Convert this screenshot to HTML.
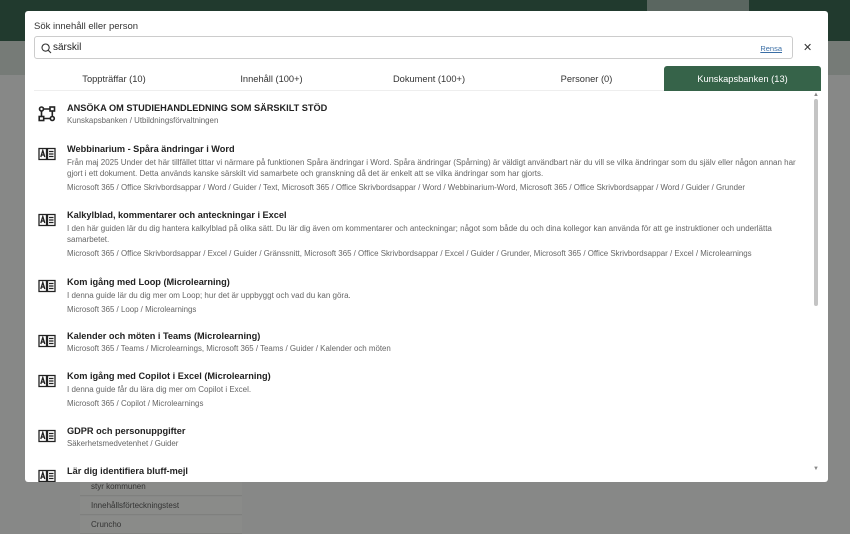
<!DOCTYPE html>
<html><head><meta charset="utf-8"><style>
*{box-sizing:border-box;margin:0;padding:0}
body{width:850px;height:532px;overflow:hidden;background:#878887;font-family:"Liberation Sans",sans-serif;position:relative}
.top{position:absolute;left:0;top:0;width:850px;height:41px;background:#213a2e}
.band{position:absolute;left:0;top:41px;width:850px;height:34px;background:#767b77}
.tb{position:absolute;left:647px;top:0;width:102px;height:41px;background:#5a6660}
.side{position:absolute;left:80px;width:162px;height:18px;background:#8a8b89;border-bottom:1px solid #7f807e;font-size:8px;color:#333;padding:4px 0 0 11px}
.modal{position:absolute;left:25px;top:11px;width:803px;height:471px;background:#fff;border-radius:3px;overflow:hidden}
.lbl{position:absolute;left:9px;top:10px;font-size:9.5px;color:#333}
.search{position:absolute;left:9px;top:25px;width:759px;height:23px;border:1px solid #ccc;border-radius:3px}
.search .q{position:absolute;left:9px;top:5px;font-size:10px;color:#222}
.search .r{position:absolute;right:10px;top:7px;font-size:7.5px;color:#3a6ea5;text-decoration:underline}
.x{position:absolute;left:778px;top:30px;font-size:11px;color:#333}
.tabs{position:absolute;left:9px;top:55px;width:787px;height:25px;border-bottom:1px solid #eee}
.tab{position:absolute;top:0;height:25px;font-size:9.3px;color:#333;text-align:center;line-height:26px}
.act{background:#366349;color:#fff;border-radius:3px 3px 0 0}
.sb{position:absolute;left:789px;top:88px;width:4px;height:207px;background:#c4c4c4;border-radius:2px}
.it{position:absolute;left:42px}
.t{font-size:9.2px;font-weight:bold;color:#222;height:15px;line-height:15px}
.d{font-size:8px;color:#666;line-height:11px;width:740px}
.p{font-size:7.9px;color:#666;margin-top:4px}
.ic{position:absolute;left:13px}
</style></head><body>
<div class="top"></div><div class="tb"></div><div class="band"></div>
<div class="side" style="top:478px">styr kommunen</div>
<div class="side" style="top:497px">Innehållsförteckningstest</div>
<div class="side" style="top:516px">Cruncho</div>
<div class="modal">
<div class="lbl">Sök innehåll eller person</div>
<div class="search"><svg style="position:absolute;left:6px;top:6px" width="11" height="11" viewBox="0 0 11 11"><circle cx="4.6" cy="4.6" r="3.6" fill="none" stroke="#333" stroke-width="1.1"/><path d="M7.3 7.3L10 10" stroke="#333" stroke-width="1.1"/></svg><span class="q" style="left:18px">särskil</span><span class="r">Rensa</span></div>
<div class="x">✕</div>
<div class="tabs">
<div class="tab" style="left:0;width:160px">Toppträffar (10)</div>
<div class="tab" style="left:160px;width:155px">Innehåll (100+)</div>
<div class="tab" style="left:315px;width:160px">Dokument (100+)</div>
<div class="tab" style="left:475px;width:155px">Personer (0)</div>
<div class="tab act" style="left:630px;width:157px">Kunskapsbanken (13)</div>
</div>
<div class="sb"></div>
<div style="position:absolute;left:788px;top:81px;font-size:6px;color:#888">▲</div>
<div style="position:absolute;left:788px;top:455px;font-size:6px;color:#888">▼</div>

<svg class="ic" style="top:95px" width="18" height="16" viewBox="0 0 18 16" fill="none" stroke="#222" stroke-width="1.6"><circle cx="3.5" cy="3" r="2"/><rect x="12" y="1" width="4.5" height="4"/><path d="M5.5 3h6.5M3.5 5v5.5"/><rect x="1.2" y="10.5" width="4.5" height="4"/><circle cx="14.3" cy="12.5" r="2"/><path d="M5.7 12.5h6.6M14.3 5v5.5"/></svg>
<div class="it" style="top:90px"><div class="t">ANSÖKA OM STUDIEHANDLEDNING SOM SÄRSKILT STÖD</div><div class="p" style="margin-top:0">Kunskapsbanken / Utbildningsförvaltningen</div></div>

<svg class="ic" style="top:136px" width="18" height="14" viewBox="0 0 18 14" fill="none" stroke="#222" stroke-width="1.3"><path d="M1 1.5h7.5v11H1zM9.5 1.5H17v11H9.5z"/><path d="M2.8 10l2-6.5 2 6.5M3.5 8h2.6M11 4.5h4.5M11 7h4.5M11 9.5h4.5"/></svg>
<div class="it" style="top:131px"><div class="t">Webbinarium - Spåra ändringar i Word</div><div class="d">Från maj 2025 Under det här tillfället tittar vi närmare på funktionen Spåra ändringar i Word. Spåra ändringar (Spårning) är väldigt användbart när du vill se vilka ändringar som du själv eller någon annan har gjort i ett dokument. Detta används kanske särskilt vid samarbete och granskning då det är enkelt att se vilka ändringar som har gjorts.</div><div class="p">Microsoft 365 / Office Skrivbordsappar / Word / Guider / Text, Microsoft 365 / Office Skrivbordsappar / Word / Webbinarium-Word, Microsoft 365 / Office Skrivbordsappar / Word / Guider / Grunder</div></div>

<svg class="ic" style="top:202px" width="18" height="14" viewBox="0 0 18 14" fill="none" stroke="#222" stroke-width="1.3"><path d="M1 1.5h7.5v11H1zM9.5 1.5H17v11H9.5z"/><path d="M2.8 10l2-6.5 2 6.5M3.5 8h2.6M11 4.5h4.5M11 7h4.5M11 9.5h4.5"/></svg>
<div class="it" style="top:197px"><div class="t">Kalkylblad, kommentarer och anteckningar i Excel</div><div class="d">I den här guiden lär du dig hantera kalkylblad på olika sätt. Du lär dig även om kommentarer och anteckningar; något som både du och dina kollegor kan använda för att ge instruktioner och underlätta samarbetet.</div><div class="p">Microsoft 365 / Office Skrivbordsappar / Excel / Guider / Gränssnitt, Microsoft 365 / Office Skrivbordsappar / Excel / Guider / Grunder, Microsoft 365 / Office Skrivbordsappar / Excel / Microlearnings</div></div>

<svg class="ic" style="top:268px" width="18" height="14" viewBox="0 0 18 14" fill="none" stroke="#222" stroke-width="1.3"><path d="M1 1.5h7.5v11H1zM9.5 1.5H17v11H9.5z"/><path d="M2.8 10l2-6.5 2 6.5M3.5 8h2.6M11 4.5h4.5M11 7h4.5M11 9.5h4.5"/></svg>
<div class="it" style="top:264px"><div class="t">Kom igång med Loop (Microlearning)</div><div class="d">I denna guide lär du dig mer om Loop; hur det är uppbyggt och vad du kan göra.</div><div class="p">Microsoft 365 / Loop / Microlearnings</div></div>

<svg class="ic" style="top:323px" width="18" height="14" viewBox="0 0 18 14" fill="none" stroke="#222" stroke-width="1.3"><path d="M1 1.5h7.5v11H1zM9.5 1.5H17v11H9.5z"/><path d="M2.8 10l2-6.5 2 6.5M3.5 8h2.6M11 4.5h4.5M11 7h4.5M11 9.5h4.5"/></svg>
<div class="it" style="top:318px"><div class="t">Kalender och möten i Teams (Microlearning)</div><div class="p" style="margin-top:0">Microsoft 365 / Teams / Microlearnings, Microsoft 365 / Teams / Guider / Kalender och möten</div></div>

<svg class="ic" style="top:363px" width="18" height="14" viewBox="0 0 18 14" fill="none" stroke="#222" stroke-width="1.3"><path d="M1 1.5h7.5v11H1zM9.5 1.5H17v11H9.5z"/><path d="M2.8 10l2-6.5 2 6.5M3.5 8h2.6M11 4.5h4.5M11 7h4.5M11 9.5h4.5"/></svg>
<div class="it" style="top:358px"><div class="t">Kom igång med Copilot i Excel (Microlearning)</div><div class="d">I denna guide får du lära dig mer om Copilot i Excel.</div><div class="p">Microsoft 365 / Copilot / Microlearnings</div></div>

<svg class="ic" style="top:418px" width="18" height="14" viewBox="0 0 18 14" fill="none" stroke="#222" stroke-width="1.3"><path d="M1 1.5h7.5v11H1zM9.5 1.5H17v11H9.5z"/><path d="M2.8 10l2-6.5 2 6.5M3.5 8h2.6M11 4.5h4.5M11 7h4.5M11 9.5h4.5"/></svg>
<div class="it" style="top:413px"><div class="t">GDPR och personuppgifter</div><div class="p" style="margin-top:0">Säkerhetsmedvetenhet / Guider</div></div>

<svg class="ic" style="top:458px" width="18" height="14" viewBox="0 0 18 14" fill="none" stroke="#222" stroke-width="1.3"><path d="M1 1.5h7.5v11H1zM9.5 1.5H17v11H9.5z"/><path d="M2.8 10l2-6.5 2 6.5M3.5 8h2.6M11 4.5h4.5M11 7h4.5M11 9.5h4.5"/></svg>
<div class="it" style="top:453px"><div class="t">Lär dig identifiera bluff-mejl</div></div>
</div>
</body></html>
